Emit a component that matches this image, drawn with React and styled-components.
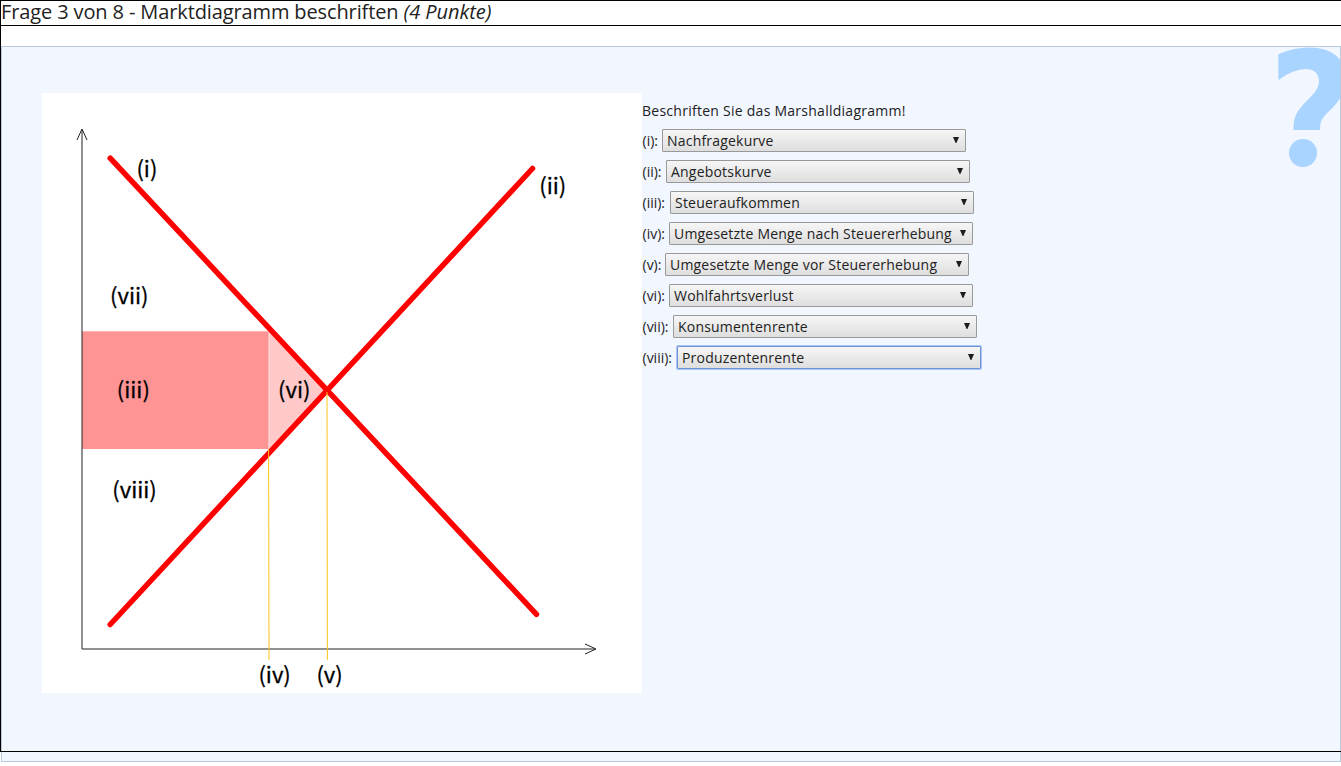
import React from "react";
import styled, { createGlobalStyle, css } from "styled-components";

const GlobalStyle = createGlobalStyle`
  body {
    margin: 0;
    min-height: 766px;
    background: #fff;
    color: #222;
    font-family: "Open Sans", "Noto Sans", sans-serif;
  }
`;

const Frame = styled.main`
  position: relative;
  box-sizing: border-box;
  height: 752px;
  border-left: 1px solid #000;
  border-top: 1px solid #000;

  &::after {
    content: "";
    position: absolute;
    inset: auto 0 0 -1px;
    border-bottom: 1px solid #000;
  }
`;

const Heading = styled.h1`
  box-sizing: border-box;
  height: 25px;
  margin: 0 0 20px;
  border-bottom: 1px solid #000;
  font-size: 20px;
  font-weight: 400;
  line-height: 22px;
  letter-spacing: -0.12px;
  white-space: nowrap;

  em {
    letter-spacing: -0.05px;
  }
`;

const Panel = styled.section`
  position: relative;
  box-sizing: border-box;
  display: flex;
  align-items: flex-start;
  height: 716px;
  padding: 46px 40px;
  border: 1px solid #b9cbdc;
  background: #f1f6ff;
`;

const Watermark = styled.div`
  position: absolute;
  top: 0;
  right: 0;
  width: 72px;
  height: 121px;
  overflow: hidden;
  color: #a8d4ff;

  &::after {
    content: "";
    position: absolute;
    left: 21px;
    bottom: 1px;
    width: 28px;
    height: 28px;
    border-radius: 50%;
    background: currentColor;
  }
`;

const WatermarkHook = styled.div`
  height: 83px;
  overflow: hidden;
  font: 700 167px/134px "DejaVu Sans Condensed", "DejaVu Sans", sans-serif;
`;

const Chart = styled.svg`
  flex: none;
  width: 600px;
  height: 600px;
  background: #fff;
`;

const ChartLabel = styled.text`
  fill: #000;
  stroke: #000;
  stroke-width: 0.3px;
  font: 400 22px "Noto Sans CJK SC", sans-serif;
`;

const Answers = styled.div`
  display: flex;
  flex-direction: column;
  gap: 8px;
  padding-top: 7px;
  font-size: 14px;
`;

const Prompt = styled.p`
  margin: 0 0 -1px;
  height: 22px;
  line-height: 22px;
  letter-spacing: 0.26px;
`;

const Row = styled.label`
  display: flex;
  height: 23px;
  line-height: 23px;
`;

const RowLabel = styled.span`
  box-sizing: border-box;
  flex: none;
  width: ${(p) => p.$width}px;
  padding-left: 0.5px;
  white-space: nowrap;
`;

const Select = styled.span`
  box-sizing: border-box;
  display: flex;
  justify-content: space-between;
  width: 304px;
  padding: 0 5px 0 4px;
  border: 1px solid #999;
  border-radius: 1px;
  background: linear-gradient(#f6f6f6, #dedede);
  line-height: 21px;
  letter-spacing: 0.2px;
  white-space: nowrap;
  ${(p) =>
    p.$focused &&
    css`
      border-color: #6b93d6;
      box-shadow: 0 0 0 1px #a9c6f5;
    `}
`;

const Arrow = styled.svg`
  flex: none;
  width: 8px;
  height: 7px;
  margin-top: 7px;
  fill: #1c1c1c;
`;

const rows = [
  ["(i):", 20, "Nachfragekurve"],
  ["(ii):", 24, "Angebotskurve"],
  ["(iii):", 28, "Steueraufkommen"],
  ["(iv):", 27, "Umgesetzte Menge nach Steuererhebung"],
  ["(v):", 23, "Umgesetzte Menge vor Steuererhebung"],
  ["(vi):", 27, "Wohlfahrtsverlust"],
  ["(vii):", 31, "Konsumentenrente"],
  ["(viii):", 35, "Produzentenrente"],
];

const marks = [
  ["(i)", 94.4, 83.6],
  ["(ii)", 497.3, 100.6],
  ["(vii)", 68, 211.4],
  ["(iii)", 74.8, 305],
  ["(vi)", 236, 305],
  ["(viii)", 70.3, 404.6],
  ["(iv)", 216.4, 589.7],
  ["(v)", 274.4, 589.7],
];

function MarketChart() {
  return (
    <Chart viewBox="0 0 600 600">
      <rect x="40" y="238.3" width="187" height="117.7" fill="#ff9494" />
      <path d="M227 238L285 297L227 356Z" fill="#ffc9c9" />
      <path d="M227 238V356" stroke="#ffe4e4" />
      <g fill="none" stroke="#222">
        <path d="M40 556V37M40 556H553" />
        <path d="M35 47L40 36L45 47M543 551L554 556L543 561" />
      </g>
      <g stroke="#ff0000" strokeWidth="5.5" strokeLinecap="round">
        <path d="M68.2 65.2L494.5 521.3" />
        <path d="M68.2 531.5L490.5 75.5" />
      </g>
      <g stroke="#fcc419">
        <path d="M226.6 356L227 567" />
        <path d="M285 299L285.4 567" />
      </g>
      {marks.map(([text, x, y]) => (
        <ChartLabel key={text} x={x} y={y}>{text}</ChartLabel>
      ))}
    </Chart>
  );
}

export default function App() {
  return (
    <>
      <GlobalStyle />
      <Frame>
        <Heading>
          Frage 3 von 8 - Marktdiagramm beschriften <em>(4 Punkte)</em>
        </Heading>
        <Panel>
          <Watermark>
            <WatermarkHook>?</WatermarkHook>
          </Watermark>
          <MarketChart />
          <Answers>
            <Prompt>Beschriften Sie das Marshalldiagramm!</Prompt>
            {rows.map(([label, width, value], i) => (
              <Row key={label}>
                <RowLabel $width={width}>{label}</RowLabel>
                <Select $focused={i === rows.length - 1}>
                  {value}
                  <Arrow viewBox="0 0 8 7">
                    <path d="M1 0H7L4.4 6H3.6Z" />
                  </Arrow>
                </Select>
              </Row>
            ))}
          </Answers>
        </Panel>
      </Frame>
    </>
  );
}
